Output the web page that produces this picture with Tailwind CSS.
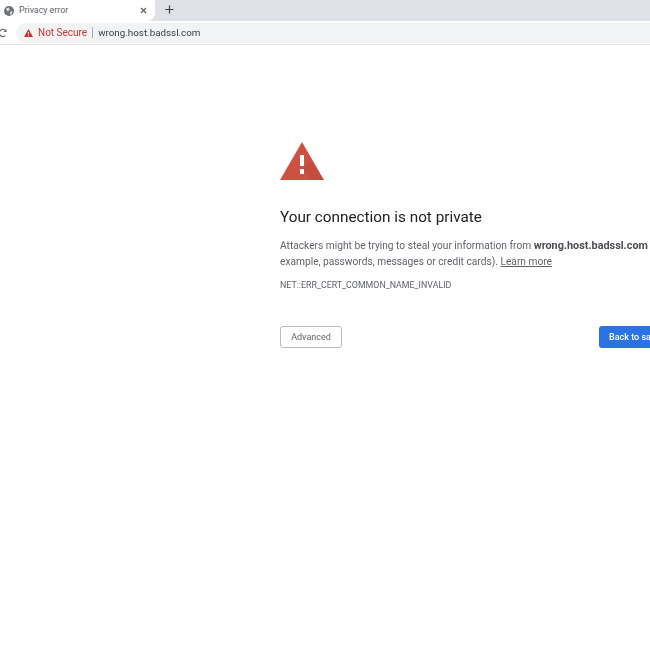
<!DOCTYPE html>
<html lang="en">
<head>
    <meta charset="UTF-8">
    <title>Privacy error</title>
    <script src="https://cdn.jsdelivr.net/npm/@tailwindcss/browser@4"></script>
</head>
<body class="bg-white w-[650px] h-[650px] overflow-hidden font-['Roboto',sans-serif] blur-[0.4px]">
    <!-- tab strip -->
    <div class="h-[21px] bg-[#dee1e6] flex">
        <div class="w-[155px] h-[21px] bg-white rounded-br-lg flex items-center pl-[4px] shrink-0">
            <svg class="w-[10px] h-[10px] shrink-0" viewBox="0 0 10 10"><circle cx="5" cy="5" r="5" fill="#6f7377"/><path d="M2 2.5 L5 1.5 L5.5 4 L3.5 5.5 Z M6 6 L8.5 5 L7.5 8.5 L6 8.5 Z" fill="#dfe1e5"/></svg>
            <span class="ml-[5px] w-[48px] text-[8.8px] leading-none text-[#5f6368] whitespace-nowrap">Privacy error</span>
            <svg class="w-[7px] h-[7px] ml-[73px] shrink-0" viewBox="0 0 7 7"><path d="M1 1 L6 6 M6 1 L1 6" stroke="#5f6368" stroke-width="1.2"/></svg>
        </div>
        <svg class="w-[9px] h-[9px] ml-[10px] mt-[5px] shrink-0" viewBox="0 0 9 9"><path d="M4.5 0.5 V8.5 M0.5 4.5 H8.5" stroke="#3c4043" stroke-width="1.2"/></svg>
    </div>
    <!-- address bar -->
    <div class="h-[23px] flex items-center border-b border-[#e4e5e7] box-content">
        <svg class="w-[8px] h-[10px] shrink-0" viewBox="0 0 8 10"><path d="M5.2 2.2 A3.6 3.6 0 1 0 5.2 7.8" fill="none" stroke="#5f6368" stroke-width="1.1"/><path d="M6.5 1 V4 H3.5 Z" fill="#5f6368"/></svg>
        <div class="ml-[8px] flex-1 h-[20px] bg-[#f1f3f4] rounded-l-full flex items-center pl-[8px]">
            <svg class="w-[9px] h-[8px] shrink-0" viewBox="0 0 9 8"><path d="M4.5 0 L9 8 H0 Z" fill="#c5352c"/><path d="M4.5 3 V5.2 M4.5 6 V7" stroke="#f1f3f4" stroke-width="0.9"/></svg>
            <span class="ml-[5px] text-[10px] leading-none text-[#c5392f] whitespace-nowrap">Not Secure</span>
            <span class="ml-[5px] w-px h-[11px] bg-[#a8abaf]"></span>
            <span class="ml-[5px] text-[9.8px] leading-none text-[#3c4043] whitespace-nowrap">wrong.host.badssl.com</span>
        </div>
    </div>
    <!-- interstitial -->
    <main class="pl-[280px] w-[650px] overflow-hidden">
        <svg class="mt-[96px] w-[44px] h-[40px] block" viewBox="0 0 44 40">
            <path d="M22 1 L44 39 H0 Z" fill="#cd5141"/>
            <path d="M22 28 L30 20 L44 39 H33 Z" fill="#b84a3b" opacity="0.5"/>
            <rect x="20" y="14" width="4" height="11" fill="#fff"/>
            <rect x="20" y="28" width="4" height="5" fill="#fff"/>
        </svg>
        <h1 class="mt-[26px] text-[15.3px] leading-[20px] font-normal text-[#202124] whitespace-nowrap">Your connection is not private</h1>
        <p class="mt-[11px] w-[500px] text-[10.2px] leading-[16px] text-[#5f6368]">Attackers might be trying to steal your information from <b class="font-bold text-[10.85px] text-[#4a4d51]">wrong.host.badssl.com</b> (for<br>example, passwords, messages or credit cards). <span class="underline text-[#5f6368]">Learn more</span></p>
        <p class="mt-[9px] text-[8.85px] leading-[12px] text-[#5f6368] whitespace-nowrap">NET::ERR_CERT_COMMON_NAME_INVALID</p>
        <div class="mt-[35px] flex w-[500px]">
            <button class="w-[62px] h-[22px] pt-[2px] border border-[#b8bbbf] rounded-[3px] bg-white text-[9px] text-[#5f6368]">Advanced</button>
            <button class="ml-[257px] w-[110px] h-[22px] pt-[2px] rounded-[3px] bg-[#2b73e0] text-[9px] font-medium text-white text-left pl-[10px] whitespace-nowrap">Back to safety</button>
        </div>
    </main>
</body>
</html>
